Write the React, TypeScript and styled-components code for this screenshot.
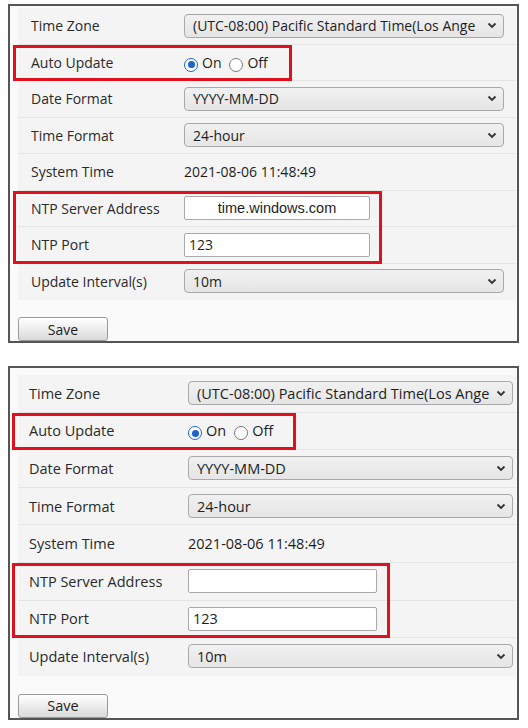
import React from "react";
import styled, { createGlobalStyle } from "styled-components";

const GlobalStyle = createGlobalStyle`
  html, body { margin: 0; padding: 0; background: #ffffff; }
  body { font-family: "Open Sans", "Noto Sans", "DejaVu Sans", sans-serif; color: #2a2a2a; }
  * { box-sizing: border-box; }
`;

type Cfg = {
  rowH: number;
  padTop: number;
  saveGap: number;
  labelW: number;
  labelPad: number;
  selectW: number;
  inputW: number;
  fs: number;
  autoBox: { left: number; width: number };
  ntpBox: { left: number; width: number };
};

const Page = styled.div`
  padding: 4px 9px 0 8px;
  display: flex;
  flex-direction: column;
  gap: 23px;
`;

const Panel = styled.div<{ $padTop: number }>`
  border: 2px solid #555;
  background: #fafafa;
  padding: ${(p) => p.$padTop}px 1px 0 8px;
  display: flex;
  flex-direction: column;
`;

const Table = styled.div`
  display: flex;
  flex-direction: column;
  background: #f4f4f4;
`;

const Group = styled.div`
  position: relative;
  display: flex;
  flex-direction: column;
`;

const Highlight = styled.div<{ $left: number; $width: number }>`
  position: absolute;
  top: 0;
  bottom: 0;
  left: ${(p) => p.$left}px;
  width: ${(p) => p.$width}px;
  border: 3px solid #e0101c;
  pointer-events: none;
`;

const Row = styled.div<{ $h: number; $last?: boolean }>`
  height: ${(p) => p.$h}px;
  display: flex;
  align-items: center;
  border-bottom: 1px solid ${(p) => (p.$last ? "transparent" : "#e4e4e4")};
`;

const Label = styled.div<{ $w: number; $pad: number; $fs: number }>`
  width: ${(p) => p.$w}px;
  padding-left: ${(p) => p.$pad}px;
  font-size: ${(p) => p.$fs}px;
  color: #2a2a2a;
  flex: none;
  white-space: nowrap;
`;

const Value = styled.div<{ $fs: number }>`
  display: flex;
  align-items: center;
  font-size: ${(p) => p.$fs}px;
  color: #1e1e1e;
  white-space: nowrap;
`;

const SelectBox = styled.div<{ $w: number }>`
  width: ${(p) => p.$w}px;
  height: 24px;
  border: 1px solid #a9a9a9;
  border-radius: 4px;
  background: linear-gradient(#f1f1f1, #e5e5e5);
  display: flex;
  align-items: center;
  padding: 0 6px 0 8px;
  gap: 4px;
`;

const SelectText = styled.span`
  flex: 1;
  overflow: hidden;
  white-space: nowrap;
`;

const Chevron = styled.svg`
  flex: none;
  width: 10px;
  height: 7px;
`;

const InputBox = styled.div<{ $w: number; $center?: boolean }>`
  width: ${(p) => p.$w}px;
  height: 24px;
  border: 1px solid #a9a9a9;
  border-radius: 2px;
  background: #fff;
  display: flex;
  align-items: center;
  justify-content: ${(p) => (p.$center ? "center" : "flex-start")};
  padding: 0 4px;
  font-family: ${(p) => (p.$center ? '"Liberation Sans", Arial, sans-serif' : "inherit")};
  font-size: ${(p) => (p.$center ? "14.5px" : "inherit")};
`;

const RadioGroup = styled.div`
  display: flex;
  align-items: center;
  gap: 5px;
`;

const RadioItem = styled.label`
  display: flex;
  align-items: center;
  gap: 4px;
  margin-right: 3px;
`;

const RadioDot = styled.span<{ $checked?: boolean }>`
  width: 14px;
  height: 14px;
  border-radius: 50%;
  margin-top: 5px;
  border: ${(p) => (p.$checked ? "1.5px solid #2166d4" : "1px solid #7a7a7a")};
  background: #fff;
  display: flex;
  align-items: center;
  justify-content: center;
  &::after {
    content: "";
    width: 7px;
    height: 7px;
    border-radius: 50%;
    background: ${(p) => (p.$checked ? "#1d63cf" : "transparent")};
  }
`;

const SaveButton = styled.button<{ $gap: number; $fs: number }>`
  margin-top: ${(p) => p.$gap}px;
  width: 90px;
  height: 24px;
  border: 1px solid #9a9a9a;
  border-radius: 3px;
  background: linear-gradient(#ffffff, #dadada);
  font-family: inherit;
  font-size: ${(p) => p.$fs}px;
  color: #222;
  padding: 0;
  align-self: flex-start;
`;

const ChevronIcon = () => (
  <Chevron viewBox="0 0 10 7">
    <polyline points="1.5,1.5 5,5 8.5,1.5" fill="none" stroke="#333" strokeWidth="1.8" />
  </Chevron>
);

const Select = ({ w, text }: { w: number; text: string }) => (
  <SelectBox $w={w}>
    <SelectText>{text}</SelectText>
    <ChevronIcon />
  </SelectBox>
);

const FormPanel = ({ cfg, server }: { cfg: Cfg; server: string }) => {
  const L = (t: string) => (
    <Label $w={cfg.labelW} $pad={cfg.labelPad} $fs={cfg.fs}>
      {t}
    </Label>
  );
  return (
    <Panel $padTop={cfg.padTop}>
      <Table>
        <Row $h={cfg.rowH}>
          {L("Time Zone")}
          <Value $fs={cfg.fs}>
            <Select w={cfg.selectW} text="(UTC-08:00) Pacific Standard Time(Los Ange" />
          </Value>
        </Row>
        <Group>
          <Row $h={cfg.rowH}>
            {L("Auto Update")}
            <Value $fs={cfg.fs}>
              <RadioGroup>
                <RadioItem>
                  <RadioDot $checked />
                  On
                </RadioItem>
                <RadioItem>
                  <RadioDot />
                  Off
                </RadioItem>
              </RadioGroup>
            </Value>
          </Row>
          <Highlight $left={cfg.autoBox.left} $width={cfg.autoBox.width} />
        </Group>
        <Row $h={cfg.rowH}>
          {L("Date Format")}
          <Value $fs={cfg.fs}>
            <Select w={cfg.selectW} text="YYYY-MM-DD" />
          </Value>
        </Row>
        <Row $h={cfg.rowH}>
          {L("Time Format")}
          <Value $fs={cfg.fs}>
            <Select w={cfg.selectW} text="24-hour" />
          </Value>
        </Row>
        <Row $h={cfg.rowH}>
          {L("System Time")}
          <Value $fs={cfg.fs}>2021-08-06 11:48:49</Value>
        </Row>
        <Group>
          <Row $h={cfg.rowH}>
            {L("NTP Server Address")}
            <Value $fs={cfg.fs}>
              <InputBox $w={cfg.inputW} $center>
                {server}
              </InputBox>
            </Value>
          </Row>
          <Row $h={cfg.rowH}>
            {L("NTP Port")}
            <Value $fs={cfg.fs}>
              <InputBox $w={cfg.inputW}>123</InputBox>
            </Value>
          </Row>
          <Highlight $left={cfg.ntpBox.left} $width={cfg.ntpBox.width} />
        </Group>
        <Row $h={cfg.rowH} $last>
          {L("Update Interval(s)")}
          <Value $fs={cfg.fs}>
            <Select w={cfg.selectW} text="10m" />
          </Value>
        </Row>
      </Table>
      <SaveButton $gap={cfg.saveGap} $fs={cfg.fs}>
        Save
      </SaveButton>
    </Panel>
  );
};

const cfg1: Cfg = {
  rowH: 36.5,
  padTop: 2,
  saveGap: 17,
  labelW: 166,
  labelPad: 13,
  selectW: 320,
  inputW: 186,
  fs: 14,
  autoBox: { left: -5, width: 279 },
  ntpBox: { left: -5, width: 369 },
};

const cfg2: Cfg = {
  rowH: 37.6,
  padTop: 7,
  saveGap: 18,
  labelW: 170,
  labelPad: 11,
  selectW: 325,
  inputW: 189,
  fs: 14.5,
  autoBox: { left: -6, width: 284 },
  ntpBox: { left: -6, width: 378 },
};

export default function App() {
  return (
    <>
      <GlobalStyle />
      <Page>
        <FormPanel cfg={cfg1} server="time.windows.com" />
        <FormPanel cfg={cfg2} server="" />
      </Page>
    </>
  );
}
